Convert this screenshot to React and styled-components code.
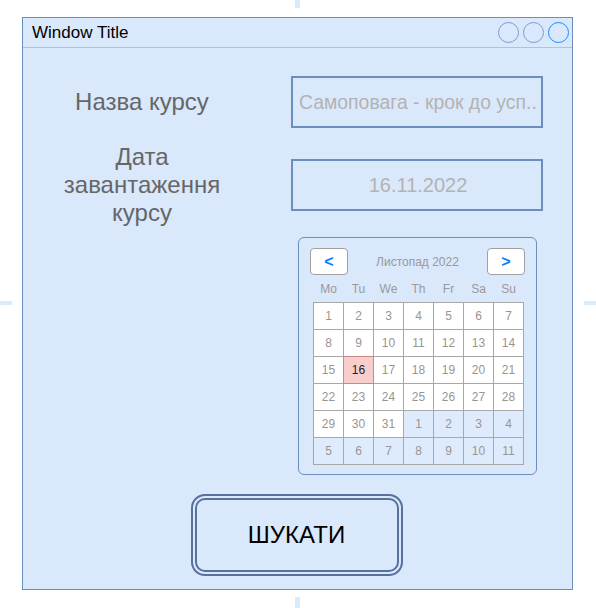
import React from 'react'
import styled, { createGlobalStyle } from 'styled-components'

const GlobalStyle = createGlobalStyle`
  html, body { margin: 0; padding: 0; background: #ffffff; }
  body { font-family: "Liberation Sans", Arial, sans-serif; }
`

const WEEKDAYS = ['Mo', 'Tu', 'We', 'Th', 'Fr', 'Sa', 'Su']

const days = [
  ...Array.from({ length: 31 }, (_, i) => ({ day: i + 1, current: true })),
  ...Array.from({ length: 11 }, (_, i) => ({ day: i + 1, current: false }))
]

export default function App () {
  return (
    <Page>
      <GlobalStyle />
      <Tick style={{ left: 295, top: 0, width: 5, height: 8 }} />
      <Tick style={{ left: 295, top: 597, width: 5, height: 11 }} />
      <Tick style={{ left: 0, top: 301, width: 12, height: 4 }} />
      <Tick style={{ left: 584, top: 301, width: 12, height: 4 }} />

      <Window>
        <TitleBar>
          <Title>Window Title</Title>
          <Controls>
            <Control />
            <Control />
            <Control $active />
          </Controls>
        </TitleBar>

        <Body>
          <Form>
            <Field>
              <Label>Назва курсу</Label>
              <Input $size={19.4}>Самоповага - крок до усп..</Input>
            </Field>
            <Field $gap={31}>
              <Label>Дата<br />завантаження<br />курсу</Label>
              <Input $center>16.11.2022</Input>
            </Field>
            <Field $gap={26}>
              <span />
              <Calendar>
                <CalHeader>
                  <NavButton>&lt;</NavButton>
                  <Month>Листопад 2022</Month>
                  <NavButton>&gt;</NavButton>
                </CalHeader>
                <Weekdays>
                  {WEEKDAYS.map(d => <Weekday key={d}>{d}</Weekday>)}
                </Weekdays>
                <Days>
                  {days.map((d, i) => (
                    <Day
                      key={i}
                      $other={!d.current}
                      $today={d.current && d.day === 16}
                    >
                      {d.day}
                    </Day>
                  ))}
                </Days>
              </Calendar>
            </Field>
          </Form>

          <Actions>
            <SearchButton>ШУКАТИ</SearchButton>
          </Actions>
        </Body>
      </Window>
    </Page>
  )
}

const Page = styled.div`
  position: relative;
  width: 596px;
  height: 608px;
  padding: 17px 0 0 22px;
  box-sizing: border-box;
  overflow: hidden;
`

const Tick = styled.div`
  position: absolute;
  background: #d9ecfb;
`

const Window = styled.div`
  width: 551px;
  height: 573px;
  box-sizing: border-box;
  border: 1px solid #6c8ebf;
  background: #dae8fc;
  display: flex;
  flex-direction: column;
`

const TitleBar = styled.div`
  height: 29px;
  border-bottom: 1px solid #c0c0c0;
  display: flex;
  align-items: center;
  justify-content: space-between;
  padding: 0 3px 0 9px;
`

const Title = styled.span`
  font-size: 17px;
  color: #000;
`

const Controls = styled.div`
  display: flex;
  gap: 4px;
`

const Control = styled.span`
  width: 21px;
  height: 21px;
  box-sizing: border-box;
  border-radius: 50%;
  border: 1.5px solid ${p => (p.$active ? '#1a8cff' : '#7d9ccb')};
`

const Body = styled.div`
  display: flex;
  flex-direction: column;
  padding-top: 28px;
`

const Form = styled.div`
  display: flex;
  flex-direction: column;
  padding-left: 19px;
`

const Field = styled.div`
  display: grid;
  grid-template-columns: 200px 252px;
  column-gap: 49px;
  align-items: start;
  margin-top: ${p => p.$gap || 0}px;
`

const Label = styled.div`
  height: 52px;
  display: flex;
  align-items: center;
  justify-content: center;
  text-align: center;
  font-size: 24px;
  line-height: 28px;
  color: #666666;
`

const Input = styled.div`
  height: 52px;
  box-sizing: border-box;
  border: 2px solid #6c8ebf;
  display: flex;
  align-items: center;
  justify-content: ${p => (p.$center ? 'center' : 'flex-start')};
  padding: 0 4px 0 6px;
  font-size: ${p => p.$size || 20}px;
  color: #b3b3b3;
  white-space: nowrap;
  overflow: hidden;
`

const Calendar = styled.div`
  margin-left: 7px;
  width: 239px;
  height: 238px;
  box-sizing: border-box;
  border: 1px solid #6c8ebf;
  border-radius: 6px;
  padding: 10px 11px 0;
  display: flex;
  flex-direction: column;
`

const CalHeader = styled.div`
  height: 27px;
  display: flex;
  align-items: center;
  justify-content: space-between;
`

const NavButton = styled.div`
  width: 38px;
  height: 27px;
  box-sizing: border-box;
  background: #fff;
  border: 1px solid #a0a0a0;
  border-radius: 4px;
  display: flex;
  align-items: center;
  justify-content: center;
  color: #007fff;
  font-weight: bold;
  font-size: 16px;
`

const Month = styled.span`
  font-size: 12px;
  color: #999;
`

const Weekdays = styled.div`
  height: 27px;
  display: grid;
  grid-template-columns: repeat(7, 29px);
  column-gap: 1px;
  padding: 0 1px;
  margin-left: 3px;
  align-items: center;
`

const Weekday = styled.span`
  text-align: center;
  font-size: 12px;
  color: #999;
`

const Days = styled.div`
  margin-left: 3px;
  width: max-content;
  display: grid;
  grid-template-columns: repeat(7, 29px);
  grid-auto-rows: 26px;
  gap: 1px;
  padding: 1px;
  background: #a8a8a8;
`

const Day = styled.div`
  display: flex;
  align-items: center;
  justify-content: center;
  font-size: 12px;
  color: ${p => (p.$today ? '#222' : '#9a9590')};
  background: ${p => (p.$today ? '#f8cecc' : p.$other ? '#deebfc' : '#ffffff')};
  outline: ${p => (p.$today ? '1px solid #c88a86' : 'none')};
`

const Actions = styled.div`
  display: flex;
  justify-content: center;
  margin-top: 19px;
  padding-right: 2px;
`

const SearchButton = styled.div`
  width: 212px;
  height: 82px;
  box-sizing: border-box;
  border: 6px double #58719c;
  border-radius: 14px;
  display: flex;
  align-items: center;
  justify-content: center;
  font-size: 24px;
  color: #000;
`
